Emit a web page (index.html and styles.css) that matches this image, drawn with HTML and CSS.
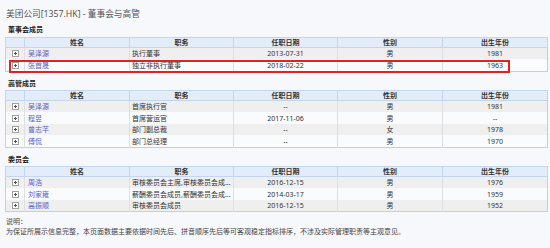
FILE: index.html
```html
<!DOCTYPE html>
<html lang="zh">
<head>
<meta charset="utf-8">
<link rel="stylesheet" href="styles.css">
</head>
<body>
<div class="page">
  <div class="title">美团公司[1357.HK] - 董事会与高管</div>

  <div class="label first">董事会成员</div>
  <div class="tablewrap">
    <table class="grid">
      <colgroup><col class="c-icon"><col class="c-name"><col class="c-pos"><col class="c-date"><col class="c-sex"><col class="c-year"></colgroup>
      <thead><tr><th></th><th>姓名</th><th>职务</th><th>任职日期</th><th>性别</th><th>出生年份</th></tr></thead>
      <tbody>
        <tr><td class="ic"><span class="exp"></span></td><td class="nm">吴泽源</td><td class="ps">执行董事</td><td>2013-07-31</td><td>男</td><td>1981</td></tr>
        <tr><td class="ic"><span class="exp"></span></td><td class="nm">张首晟</td><td class="ps">独立非执行董事</td><td>2018-02-22</td><td>男</td><td>1963</td></tr>
      </tbody>
    </table>
    <div class="highlight"></div>
  </div>

  <div class="label">高管成员</div>
  <table class="grid">
    <colgroup><col class="c-icon"><col class="c-name"><col class="c-pos"><col class="c-date"><col class="c-sex"><col class="c-year"></colgroup>
    <thead><tr><th></th><th>姓名</th><th>职务</th><th>任职日期</th><th>性别</th><th>出生年份</th></tr></thead>
    <tbody>
      <tr><td class="ic"><span class="exp"></span></td><td class="nm">吴泽源</td><td class="ps">首席执行官</td><td>--</td><td>男</td><td>1981</td></tr>
      <tr><td class="ic"><span class="exp"></span></td><td class="nm">程昱</td><td class="ps">首席营运官</td><td>2017-11-06</td><td>男</td><td>--</td></tr>
      <tr><td class="ic"><span class="exp"></span></td><td class="nm">曾志芊</td><td class="ps">部门副总裁</td><td>--</td><td>女</td><td>1978</td></tr>
      <tr><td class="ic"><span class="exp"></span></td><td class="nm">傅侃</td><td class="ps">部门总经理</td><td>--</td><td>男</td><td>1970</td></tr>
    </tbody>
  </table>

  <div class="label third">委员会</div>
  <table class="grid">
    <colgroup><col class="c-icon"><col class="c-name"><col class="c-pos"><col class="c-date"><col class="c-sex"><col class="c-year"></colgroup>
    <thead><tr><th></th><th>姓名</th><th>职务</th><th>任职日期</th><th>性别</th><th>出生年份</th></tr></thead>
    <tbody>
      <tr><td class="ic"><span class="exp"></span></td><td class="nm">周浩</td><td class="ps">审核委员会主席,审核委员会成...</td><td>2016-12-15</td><td>男</td><td>1976</td></tr>
      <tr><td class="ic"><span class="exp"></span></td><td class="nm">刘家雍</td><td class="ps">薪酬委员会成员,薪酬委员会成...</td><td>2014-03-17</td><td>男</td><td>1959</td></tr>
      <tr><td class="ic"><span class="exp"></span></td><td class="nm">高振顺</td><td class="ps">审核委员会成员</td><td>2016-12-15</td><td>男</td><td>1952</td></tr>
    </tbody>
  </table>

  <div class="note">
    <div class="note-line">说明：</div>
    <div class="note-line">为保证所展示信息完整，本页面数据主要依据时间先后、拼音顺序先后等可客观稳定指标排序，不涉及实际管理职责等主观意见。</div>
  </div>
</div>
</body>
</html>
```

FILE: styles.css
```css
html, body {
  margin: 0;
  padding: 0;
}
body {
  width: 550px;
  height: 248px;
  overflow: hidden;
  background: #f7f8fb;
  font-family: "Noto Sans", "Noto Sans CJK SC", sans-serif;
  color: #333;
}
.page {
  padding: 8px 3px 0 5px;
}
.title {
  font-size: 8.7px;
  height: 12px;
  line-height: 12px;
  color: #555;
  margin-left: 1px;
  white-space: nowrap;
}
.label {
  font-size: 7px;
  font-weight: bold;
  height: 10px;
  line-height: 10px;
  color: #222;
  margin: 7px 0 1px 3px;
  overflow: hidden;
}
.label.first {
  margin-top: 5px;
  margin-bottom: 2px;
}
.label.third {
  margin-top: 7px;
  margin-bottom: 1px;
}
.tablewrap {
  position: relative;
}
.grid {
  width: 542px;
  border-collapse: collapse;
  table-layout: fixed;
  font-size: 7px;
  border: 1px solid #bcd0ea;
}
.c-icon { width: 19px; }
.c-name { width: 105px; }
.c-pos { width: 104px; }
.c-date { width: 104px; }
.c-sex { width: 105px; }
.c-year { width: 105px; }
.grid th {
  height: 9px;
  padding: 0;
  line-height: 7px;
  background: #e3edf9;
  border: 1px solid #c3d6ee;
  font-weight: bold;
  color: #333;
  text-align: center;
  vertical-align: middle;
}
.grid td {
  padding: 0;
  line-height: 7px;
  text-align: center;
  vertical-align: middle;
  border-left: 1px solid #dcdfe4;
  white-space: nowrap;
  overflow: hidden;
}
.grid tbody tr:nth-child(odd) td {
  height: 11px;
  background: #efefef;
}
.grid tbody tr:nth-child(even) td {
  height: 12px;
  background: #fafbfd;
}
.grid td.nm {
  text-align: left;
  padding-left: 3px;
  color: #5b62c4;
}
.grid td.ps {
  text-align: left;
  padding-left: 2px;
}
.grid td.ic {
  border-left: none;
}
.exp {
  display: block;
  width: 5px;
  height: 5px;
  margin: 0 auto;
  border: 1px solid #a0a0a0;
  background: #fff;
  position: relative;
}
.exp::before {
  content: "";
  position: absolute;
  left: 1px;
  top: 2px;
  width: 3px;
  height: 1px;
  background: #555;
}
.exp::after {
  content: "";
  position: absolute;
  left: 2px;
  top: 1px;
  width: 1px;
  height: 3px;
  background: #555;
}
.highlight {
  position: absolute;
  left: 4px;
  top: 23px;
  width: 501px;
  height: 13px;
  border: 2px solid #e5201e;
  box-sizing: border-box;
}
.note {
  margin-top: 4.5px;
  margin-left: 1px;
  font-size: 7px;
  color: #444;
}
.note-line {
  height: 10px;
  line-height: 10px;
  white-space: nowrap;
  overflow: hidden;
}
```
